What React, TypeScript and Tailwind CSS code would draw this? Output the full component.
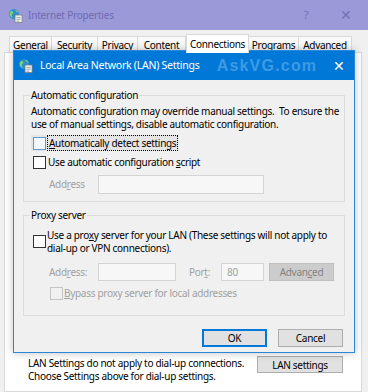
import React from 'react';

const NetIcon: React.FC = () => (
  <svg width="15" height="15" viewBox="0 0 16 16" className="shrink-0">
    <circle cx="6.5" cy="6.5" r="5.5" fill="#2f8fcf" />
    <path d="M3 3.5c1.5-.8 2.8.2 2.6 1.5-.2 1.2-1.8 1-1.6 2.6.1 1 1.2 1.5.6 2.8-1.6-.4-2.8-2-2.8-3.9 0-1.2.4-2.2 1.2-3z" fill="#7fd36b" />
    <path d="M8 2.2c1.4.2 2.6 1.2 3.2 2.5-.9.3-1.7-.3-2.3-.9-.5-.5-1-.9-.9-1.6z" fill="#7fd36b" />
    <rect x="7.5" y="7.5" width="7.5" height="8" fill="#f4f4f4" stroke="#7a7a7a" strokeWidth="0.8" />
    <path d="M9 10h4.5M9 12h4.5M9 14h3" stroke="#8a8a8a" strokeWidth="0.8" />
  </svg>
);

const Box: React.FC<{ tone?: 'normal' | 'hover' | 'disabled' }> = ({ tone = 'normal' }) => (
  <span
    className={`block shrink-0 w-[13px] h-[13px] border ${
      tone === 'hover'
        ? 'border-[#5a9bd5] bg-[#f3f8fd]'
        : tone === 'disabled'
        ? 'border-[#c4c4c4] bg-[#f0f0f0]'
        : 'border-[#333333] bg-white'
    }`}
  />
);

const tabs = [
  { label: 'General', w: 'w-[43px]' },
  { label: 'Security', w: 'w-[46px]' },
  { label: 'Privacy', w: 'w-[40px]' },
  { label: 'Content', w: 'w-[48px]' },
  { label: 'Connections', w: 'w-[63px]', active: true },
  { label: 'Programs', w: 'w-[50px]' },
  { label: 'Advanced', w: 'w-[53px]' },
];

const App: React.FC = () => {
  return (
    <div className="relative w-[368px] h-[392px] overflow-hidden whitespace-nowrap bg-[#f0f0f0] font-['Noto_Sans',sans-serif] text-[10px] tracking-[-0.3px] text-black">
      {/* Internet Properties window */}
      <div className="flex flex-col h-full">
        <div className="h-[30px] shrink-0 bg-[#9c99d9] flex items-center pl-[8px] pr-[16px]">
          <NetIcon />
          <span className="ml-[5px] text-[10px] tracking-[-0.2px] text-[#6f6bb2]">Internet Properties</span>
          <span className="ml-auto text-[11px] text-[#7471b5]">?</span>
          <span className="ml-[32px] text-[14px] leading-none text-[#7471b5]">✕</span>
        </div>
        <div className="h-[22px] shrink-0 flex items-end pl-[9px]">
          {tabs.map((t) =>
            t.active ? (
              <div
                key={t.label}
                className={`${t.w} h-[19px] -mb-px z-10 bg-white border border-b-0 border-[#d9d9d9] flex items-center justify-center leading-none`}
              >
                {t.label}
              </div>
            ) : (
              <div
                key={t.label}
                className={`${t.w} h-[16px] bg-[#f9f9f9] border border-b-0 border-l-0 first:border-l border-[#d9d9d9] flex items-center justify-center leading-none`}
              >
                {t.label}
              </div>
            )
          )}
        </div>
        <div className="ml-[4px] mr-[6px] flex-1 bg-white border border-[#d9d9d9] flex flex-col">
          <div className="h-[303px] shrink-0" />
          <div className="flex items-start pl-[23px] pr-[18px]">
            <div className="leading-[13px] pt-[1px]">
              <div>LAN Settings do not apply to dial-up connections.</div>
              <div>Choose Settings above for dial-up settings.</div>
            </div>
            <button className="ml-auto w-[86px] h-[17px] bg-[#e1e1e1] border border-[#adadad] leading-none">
              LAN settings
            </button>
          </div>
        </div>
      </div>

      {/* LAN Settings dialog */}
      <div className="absolute left-[13px] top-[50px] w-[342px] h-[303px] border border-[#2a86d6] bg-[#f0f0f0] flex flex-col shadow-[0_0_8px_rgba(0,0,0,0.25)]">
        <div className="h-[29px] shrink-0 bg-[#0078d7] flex items-center pl-[4px] pr-[9px] text-white">
          <NetIcon />
          <span className="ml-[7px] text-[10.5px] tracking-[-0.25px]">Local Area Network (LAN) Settings</span>
          <span className="ml-auto text-[16px] font-bold tracking-[1.2px] text-[#3f9ae4] font-['Liberation_Sans',sans-serif]">
            AskVG.com
          </span>
          <span className="ml-[16px] text-[14px] leading-none">✕</span>
        </div>

        <div className="px-[9px] pt-[8px]">
          <fieldset className="border border-[#dcdcdc] pb-[7px]">
            <legend className="ml-[6px] px-[1px] leading-[14px]">Automatic configuration</legend>
            <div className="mt-[3px] pl-[7px] leading-[13px]">
              <div>Automatic configuration may override manual settings.&nbsp; To ensure the</div>
              <div>use of manual settings, disable automatic configuration.</div>
            </div>
            <div className="mt-[4px] pl-[7px] h-[16px] flex">
              <div className="h-full bg-[#e5e5e5] flex items-center pl-[2px] pr-[1px]">
                <Box tone="hover" />
                <span className="ml-[1px] h-[16px] border border-dotted border-black px-[1px] leading-[14px]">
                  <u>A</u>utomatically detect settings
                </span>
              </div>
            </div>
            <div className="mt-[3px] pl-[9px] h-[16px] flex items-center">
              <Box />
              <span className="ml-[2px]">
                Use automatic configuration <u>s</u>cript
              </span>
            </div>
            <div className="mt-[5px] pl-[25px] flex items-center">
              <span className="w-[49px] text-[#a0a0a0]">
                Add<u>r</u>ess
              </span>
              <div className="w-[166px] h-[19px] border border-[#d4d4d4] bg-[#f7f7f7]" />
            </div>
          </fieldset>

          <fieldset className="mt-[6px] border border-[#dcdcdc] pb-[14px]">
            <legend className="ml-[6px] px-[1px] leading-[14px]">Proxy server</legend>
            <div className="mt-[7px] pl-[9px] flex items-center">
              <Box />
              <div className="ml-[1px] leading-[12px]">
                <div>
                  Use a pro<u>x</u>y server for your LAN (These settings will not apply to
                </div>
                <div className="mt-px">dial-up or VPN connections).</div>
              </div>
            </div>
            <div className="mt-[9px] pl-[25px] flex items-center text-[#a0a0a0]">
              <span className="w-[49px]">
                Add<u>r</u>ess:
              </span>
              <div className="w-[78px] h-[18px] border border-[#d4d4d4] bg-[#f7f7f7]" />
              <span className="ml-[13px] w-[32px]">
                Por<u>t</u>:
              </span>
              <div className="w-[43px] h-[18px] border border-[#d4d4d4] bg-[#f7f7f7] flex items-center pl-[5px]">
                80
              </div>
              <div className="ml-[5px] w-[65px] h-[18px] bg-[#cccccc] border border-[#bfbfbf] text-[#838383] flex items-center justify-center">
                Advan<u>c</u>ed
              </div>
            </div>
            <div className="mt-[5px] pl-[26px] flex items-center text-[#a0a0a0]">
              <Box tone="disabled" />
              <span className="ml-[1px]">
                <u>B</u>ypass proxy server for local addresses
              </span>
            </div>
          </fieldset>

          <div className="mt-[13px] flex justify-end gap-[11px] pr-[2px]">
            <button className="w-[65px] h-[18px] bg-[#e1e1e1] border-2 border-[#0078d7] leading-none">OK</button>
            <button className="w-[65px] h-[18px] bg-[#e1e1e1] border border-[#adadad] leading-none">Cancel</button>
          </div>
        </div>
      </div>
    </div>
  );
};

export default App;
